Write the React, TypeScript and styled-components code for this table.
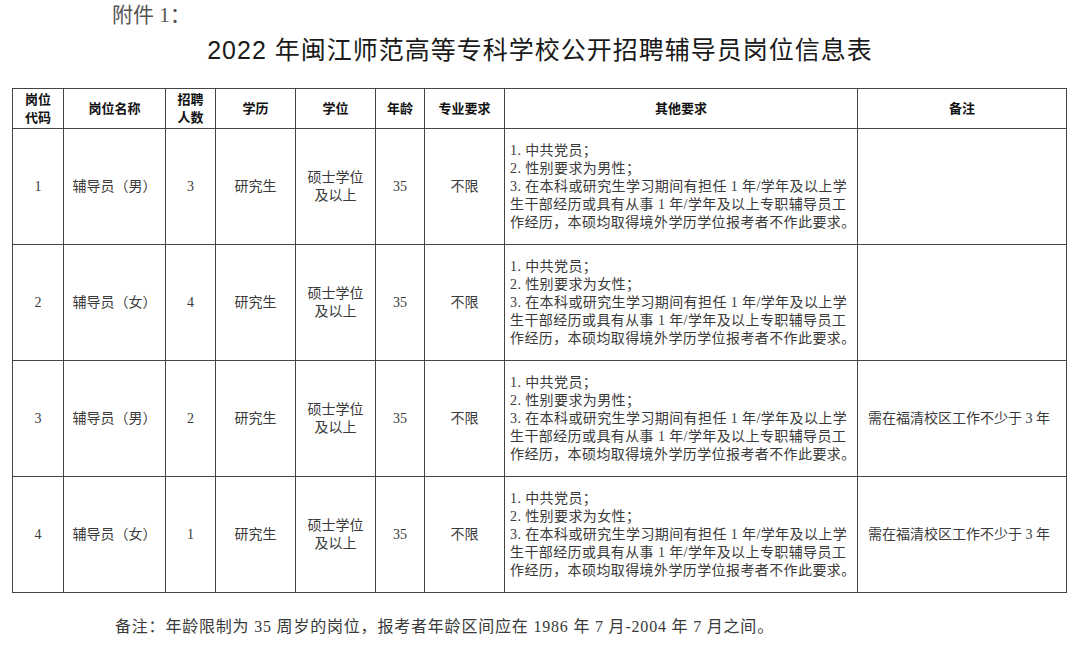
import React from 'react'
import styled, { createGlobalStyle } from 'styled-components';

interface IPost {
  code: number,
  name: string,
  count: number,
  gender: string,
  note: string,
}

const posts: IPost[] = [
  { code: 1, name: '辅导员（男）', count: 3, gender: '男', note: '' },
  { code: 2, name: '辅导员（女）', count: 4, gender: '女', note: '' },
  { code: 3, name: '辅导员（男）', count: 2, gender: '男', note: '需在福清校区工作不少于 3 年' },
  { code: 4, name: '辅导员（女）', count: 1, gender: '女', note: '需在福清校区工作不少于 3 年' },
];

const colWidths = [51, 102, 50, 80, 80, 49, 80, 353, 209];

const serif = `"Liberation Serif", "Noto Sans CJK SC", serif`;
const sans = `"Liberation Sans", "Noto Sans CJK SC", sans-serif`;

const GlobalStyle = createGlobalStyle`
  body {
    margin: 0;
    background: #ffffff;
    font-family: ${serif};
  }
`

const Page = styled.div`
    width: 1080px;
    height: 645px;
    overflow: hidden;
    display: flex;
    flex-direction: column;
`

const Attachment = styled.div`
    font-family: ${serif};
    font-size: 21px;
    color: #555;
    padding: 3px 0 0 112px;
    line-height: 24px;
    height: 27px;
`

const Title = styled.h1`
    margin: 0;
    font-family: ${sans};
    font-weight: 400;
    font-size: 25px;
    line-height: 40px;
    height: 58px;
    text-align: center;
    color: #1a1a1a;
    letter-spacing: 1px;
`

const Table = styled.table`
    margin-left: 12px;
    width: 1054px;
    table-layout: fixed;
    border-collapse: collapse;
    border: 1px solid #444;
`

const HeadCell = styled.th`
    height: 39px;
    padding: 0;
    border: 1px solid #444;
    font-family: ${sans};
    font-weight: 700;
    font-size: 13px;
    line-height: 18px;
    color: #111;
    text-align: center;
    vertical-align: middle;
`

const Cell = styled.td<{ $align?: 'left' | 'center' }>`
    height: 115px;
    padding: 0 ${p => p.$align === 'left' ? '5px' : '0'};
    border: 1px solid #444;
    font-family: ${serif};
    font-size: 14px;
    line-height: 18px;
    color: #3a3a3a;
    text-align: ${p => p.$align || 'center'};
    vertical-align: middle;
    white-space: nowrap;
`

const NoteCell = styled(Cell)`
    padding-left: 10px;
`

const Line = styled.div`
    white-space: nowrap;
    letter-spacing: 0.4px;
`

const Footnote = styled.div`
    font-family: ${serif};
    font-size: 16px;
    color: #3a3a3a;
    padding: 24px 0 0 115px;
    line-height: 20px;
    letter-spacing: 0.8px;
`

const headers = ['岗位\n代码', '岗位名称', '招聘\n人数', '学历', '学位', '年龄', '专业要求', '其他要求', '备注'];

function Requirements({ gender }: { gender: string }) {
  return (
    <>
      <Line>1. 中共党员；</Line>
      <Line>2. 性别要求为{gender}性；</Line>
      <Line>3. 在本科或研究生学习期间有担任 1 年/学年及以上学</Line>
      <Line>生干部经历或具有从事 1 年/学年及以上专职辅导员工</Line>
      <Line>作经历，本硕均取得境外学历学位报考者不作此要求。</Line>
    </>
  )
}

export default function App() {
  return (
    <Page>
      <GlobalStyle />
      <Attachment>附件 1：</Attachment>
      <Title>2022 年闽江师范高等专科学校公开招聘辅导员岗位信息表</Title>
      <Table>
        <colgroup>
          {colWidths.map((w, i) => <col key={i} style={{ width: w }} />)}
        </colgroup>
        <thead>
          <tr>
            {headers.map((h, i) =>
              <HeadCell key={i}>
                {h.split('\n').map((part, j) => <div key={j}>{part}</div>)}
              </HeadCell>)}
          </tr>
        </thead>
        <tbody>
          {posts.map(post =>
            <tr key={post.code}>
              <Cell>{post.code}</Cell>
              <Cell>{post.name}</Cell>
              <Cell>{post.count}</Cell>
              <Cell>研究生</Cell>
              <Cell>
                <div>硕士学位</div>
                <div>及以上</div>
              </Cell>
              <Cell>35</Cell>
              <Cell>不限</Cell>
              <Cell $align='left'><Requirements gender={post.gender} /></Cell>
              <NoteCell $align='left'>{post.note}</NoteCell>
            </tr>)}
        </tbody>
      </Table>
      <Footnote>备注：年龄限制为 35 周岁的岗位，报考者年龄区间应在 1986 年 7 月-2004 年 7 月之间。</Footnote>
    </Page>
  )
}
